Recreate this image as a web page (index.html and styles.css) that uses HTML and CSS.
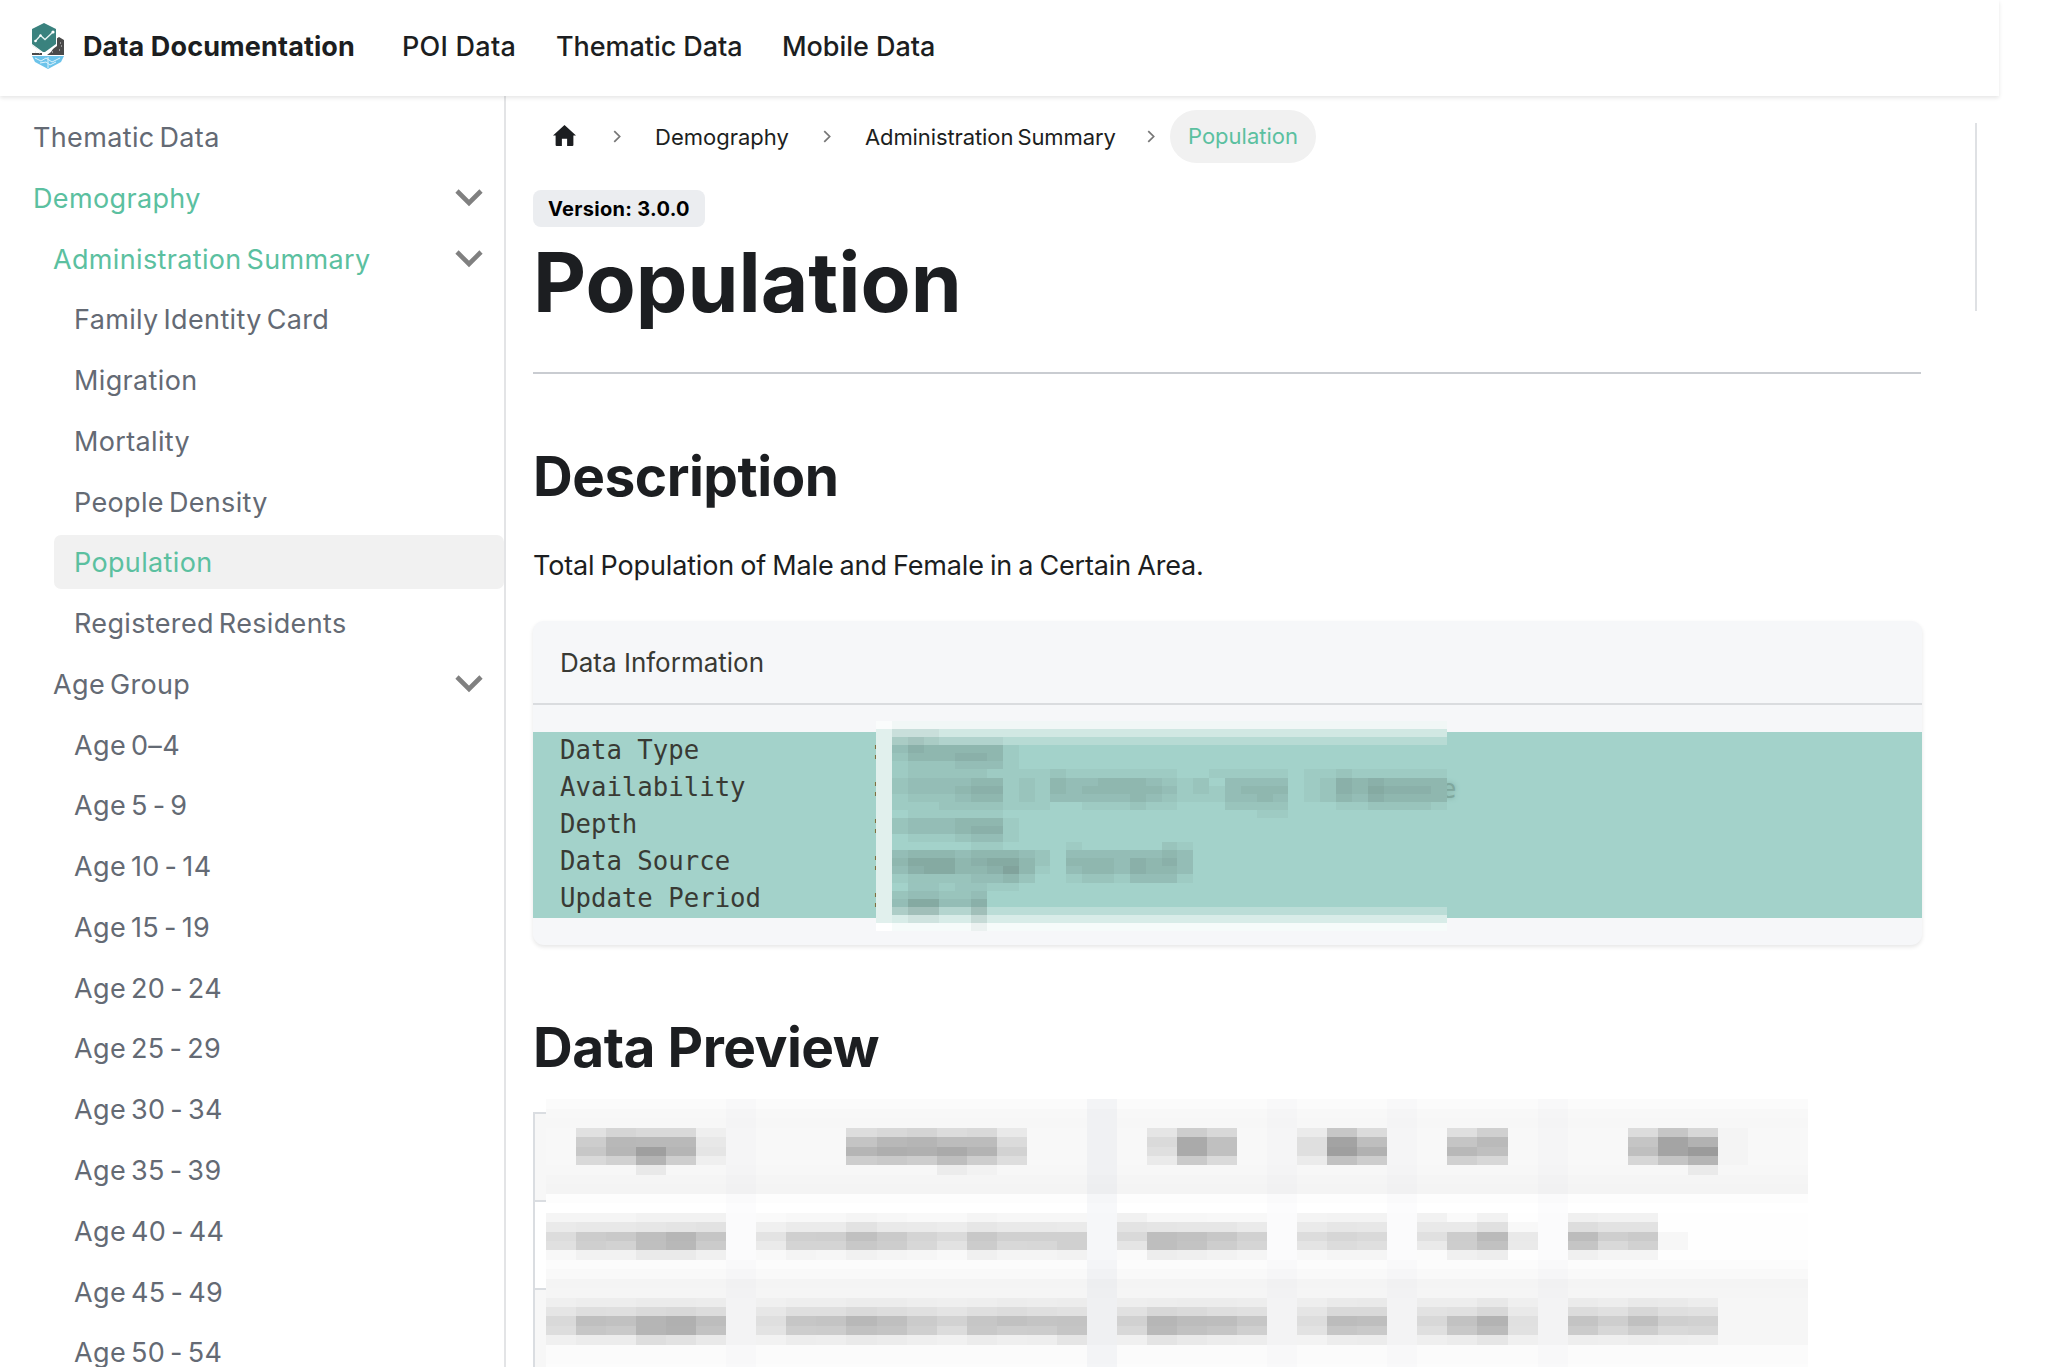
FILE: index.html
```html
<!DOCTYPE html>
<html lang="en">
<head>
    <meta charset="UTF-8">
    <meta name="viewport" content="width=device-width, initial-scale=1.0">
    <title>Population | Data Documentation</title>
    <link rel="stylesheet" href="styles.css">
</head>
<body>

<nav class="navbar">
    <a class="brand" href="#">
        <svg class="brand-logo" viewBox="0 0 34 46">
            <path d="M1 30 L1 22 L12 30 Z M1 22 V32 H12 V27 Z M20 29 L25 21 V16 L28 14 L33 17 V32 H16 Z" fill="#4a4a4a"/>
            <path d="M1 33 H33 L30 39 L17 46 L4 39 Z" fill="#6cc3ea"/>
            <path d="M4 35 l6 3 l5 -3 l6 4 l8 -4 M9 40 l6 -1 l4 3 l6 -3 M17 34 v11" stroke="#dff3fc" stroke-width="1" fill="none"/>
            <path d="M13 0 L26 6 V23 L15 31 V33 H11 V30 L1 22 V6 Z" fill="#fff"/>
            <path d="M13 0 L25 6 V21 L14 29 H12 L1 21 V6 Z" fill="#3a827e"/>
            <path d="M4.500 18 L9.500 12.500 L14 16.500 L22 9" stroke="#e8f4f3" stroke-width="1.300" fill="none"/>
            <circle cx="4.500" cy="18" r="1.300" fill="#fff"/>
            <circle cx="9.500" cy="12.500" r="1.200" fill="#fff"/>
            <circle cx="22" cy="9" r="1.600" fill="#fff"/>
            <path d="M4 29 h1 M8 30 h1 M29 20 h1 M28 27 h1 M21 29 h1 M30 23 h1" stroke="#ddd"/>
        </svg>
        <b class="brand-title">Data Documentation</b>
    </a>
    <a class="nav-link poi" href="#">POI Data</a>
    <a class="nav-link thematic" href="#">Thematic Data</a>
    <a class="nav-link mobile" href="#">Mobile Data</a>
</nav>

<div class="page">
    <aside class="sidebar">
        <a class="item" href="#"><span>Thematic Data</span></a>
        <a class="item active" href="#"><span>Demography</span><svg class="caret" viewBox="0 0 28 18"><path d="M2 2 L14 14 L26 2"/></svg></a>
        <a class="item level2 active" href="#"><span>Administration Summary</span><svg class="caret" viewBox="0 0 28 18"><path d="M2 2 L14 14 L26 2"/></svg></a>
        <a class="item level3" href="#"><span>Family Identity Card</span></a>
        <a class="item level3" href="#"><span>Migration</span></a>
        <a class="item level3" href="#"><span>Mortality</span></a>
        <a class="item level3" href="#"><span>People Density</span></a>
        <a class="item level3 active current" href="#"><span>Population</span></a>
        <a class="item level3" href="#"><span>Registered Residents</span></a>
        <a class="item level2" href="#"><span>Age Group</span><svg class="caret" viewBox="0 0 28 18"><path d="M2 2 L14 14 L26 2"/></svg></a>
        <a class="item level3" href="#"><span>Age 0–4</span></a>
        <a class="item level3" href="#"><span>Age 5 - 9</span></a>
        <a class="item level3" href="#"><span>Age 10 - 14</span></a>
        <a class="item level3" href="#"><span>Age 15 - 19</span></a>
        <a class="item level3" href="#"><span>Age 20 - 24</span></a>
        <a class="item level3" href="#"><span>Age 25 - 29</span></a>
        <a class="item level3" href="#"><span>Age 30 - 34</span></a>
        <a class="item level3" href="#"><span>Age 35 - 39</span></a>
        <a class="item level3" href="#"><span>Age 40 - 44</span></a>
        <a class="item level3" href="#"><span>Age 45 - 49</span></a>
        <a class="item level3" href="#"><span>Age 50 - 54</span></a>
    </aside>

    <main class="content">
        <div class="breadcrumbs">
            <svg class="home" viewBox="0 0 22 20"><path d="M11 0 L22 10 H19.500 V19 Q19.500 20 18.500 20 H13.500 V13 H8.500 V20 H3.500 Q2.500 20 2.500 19 V10 H0 Z"/></svg>
            <svg class="sep" viewBox="0 0 8 12"><path d="M1 1 L6 6 L1 11"/></svg>
            <a class="crumb c-demo" href="#">Demography</a>
            <svg class="sep" viewBox="0 0 8 12"><path d="M1 1 L6 6 L1 11"/></svg>
            <a class="crumb c-admin" href="#">Administration Summary</a>
            <svg class="sep" viewBox="0 0 8 12"><path d="M1 1 L6 6 L1 11"/></svg>
            <span class="crumb pill">Population</span>
        </div>

        <span class="version">Version: 3.0.0</span>
        <h1>Population</h1>
        <hr>

        <h2 class="h-desc">Description</h2>
        <p class="lead">Total Population of Male and Female in a Certain Area.</p>

        <section class="card">
            <div class="card-title"><span>Data Information</span></div>
            <div class="card-body">
                <pre class="info">Data Type           :
Availability        :
Depth               :
Data Source         :
Update Period       :</pre>
                <span class="last-letter">e</span>
                <svg id="info-values" class="info-values" viewBox="0 0 36 26" preserveAspectRatio="none" shape-rendering="crispEdges"></svg>
            </div>
        </section>

        <h2 class="h-preview">Data Preview</h2>
        <div class="preview">
            <div class="preview-edge">
                <div class="edge head"></div>
                <div class="edge"></div>
                <div class="edge shaded"></div>
            </div>
            <svg id="preview-table" class="preview-table" viewBox="0 0 42 30" preserveAspectRatio="none" shape-rendering="crispEdges"></svg>
        </div>
    </main>

    <div class="toc"></div>
</div>

<script src="blocks.js"></script>
</body>
</html>
```

FILE: styles.css
```css
* {
    box-sizing: border-box;
}

body {
    margin: 0;
    height: 1367px;
    overflow: hidden;
    background: #fff;
    color: #1c1e21;
    font-family: Inter, "Open Sans", sans-serif;
    font-size: 27px;
}

a {
    color: inherit;
    text-decoration: none;
}

.navbar {
    position: relative;
    z-index: 2;
    display: flex;
    align-items: center;
    width: 1999px;
    height: 96px;
    padding: 0 0 4px 31px;
    background: #fff;
    box-shadow: 0 2px 4px rgba(0, 0, 0, 0.1);
}

.brand {
    display: flex;
    align-items: center;
    width: 371px;
}

.brand-logo {
    width: 34px;
    height: 46px;
    margin-right: 18px;
}

.brand-title {
    font-weight: 700;
    letter-spacing: 0.12px;
}

.nav-link {
    font-weight: 500;
    white-space: nowrap;
    letter-spacing: -0.05px;
}

.poi {
    width: 154px;
    letter-spacing: 0.25px;
}

.thematic {
    width: 226px;
}

.page {
    display: flex;
    height: 1271px;
}

/* left menu */
.sidebar {
    flex: none;
    width: 506px;
    height: 1271px;
    padding-top: 14px;
    border-right: 2px solid #e3e4e6;
    overflow: hidden;
    color: #646a74;
}

.item {
    display: flex;
    align-items: center;
    justify-content: space-between;
    height: 54px;
    margin-bottom: 6.77px;
    margin-left: 13px;
    padding: 1px 21px 0 20px;
    border-radius: 7px;
    letter-spacing: 0.35px;
    word-spacing: -3px;
    white-space: nowrap;
}

.level2 {
    margin-left: 33px;
}

.level3 {
    margin-left: 54px;
}

.active {
    color: #5bc0a0;
}

.current {
    background: #f1f1f1;
}

.caret {
    width: 28px;
    height: 18px;
}

.caret path {
    fill: none;
    stroke: #808080;
    stroke-width: 4.6;
}

/* document column */
.content {
    flex: none;
    width: 1388px;
    margin-left: 27px;
    padding-top: 14px;
}

.breadcrumbs {
    display: flex;
    align-items: center;
    height: 53px;
    padding-left: 20px;
    font-size: 22px;
}

.home {
    width: 23px;
    height: 21px;
    margin-top: -2px;
    margin-right: 37px;
    fill: #1c1e21;
}

.sep {
    width: 9px;
    height: 13px;
    margin-right: 33px;
}

.sep path {
    fill: none;
    stroke: #777;
    stroke-width: 1.6;
}

.crumb {
    white-space: nowrap;
}

.c-demo {
    width: 168px;
}

.c-admin {
    width: 282px;
    letter-spacing: -0.1px;
    word-spacing: -2px;
}

.pill {
    width: 146px;
    height: 53px;
    margin-left: -19px;
    border-radius: 27px;
    background: #f1f1f1;
    color: #5bc0a0;
    line-height: 53px;
    text-align: center;
}

.version {
    display: block;
    width: 172px;
    height: 37px;
    margin-top: 27px;
    border-radius: 8px;
    background: #ebedf0;
    color: #000;
    font-size: 20px;
    font-weight: 700;
    letter-spacing: 0.3px;
    line-height: 38px;
    text-align: center;
}

h1,
h2,
p {
    margin: 0;
    white-space: nowrap;
}

h1 {
    height: 110px;
    margin-top: 1px;
    font-size: 82px;
    font-weight: 700;
    line-height: 110px;
}

hr {
    height: 2px;
    margin: 34px 0 0;
    border: 0;
    background: #c9ccd1;
}

h2 {
    height: 70px;
    font-size: 55px;
    font-weight: 700;
    letter-spacing: -0.5px;
    line-height: 70px;
}

.h-desc {
    margin-top: 67px;
}

.lead {
    height: 40px;
    margin-top: 35px;
    letter-spacing: -0.15px;
    line-height: 40px;
    word-spacing: -1.3px;
}

.card {
    width: 1389px;
    height: 324px;
    margin-top: 35px;
    border-radius: 11px;
    background: #f6f7f9;
    box-shadow: 0 2px 4px rgba(0, 0, 0, 0.1);
}

.card-title {
    display: flex;
    align-items: center;
    height: 84px;
    padding-left: 27px;
    border-bottom: 2px solid #dadcdf;
    color: #393a34;
    font-size: 26px;
}

.card-body {
    position: relative;
    padding-top: 27px;
}

.info {
    height: 186px;
    margin: 0;
    padding-left: 27px;
    background: #a3d2ca;
    color: #393a34;
    font-family: "DejaVu Sans Mono", monospace;
    font-size: 25.7px;
    line-height: 37.1px;
}

/* blurred values lie over the code block */
.info-values {
    position: absolute;
    left: 343px;
    top: 16px;
    width: 571px;
    height: 210px;
}

.last-letter {
    position: absolute;
    left: 908px;
    top: 69px;
    color: #7fa79d;
    font: 25.7px/30px "DejaVu Sans Mono", monospace;
    text-shadow: 0 0 5px #7fa79d;
}

.h-preview {
    margin-top: 67px;
}

.preview {
    display: flex;
    margin-top: 6px;
}

.preview-edge {
    width: 11px;
    margin-right: 2px;
    padding-top: 24px;
}

.edge {
    width: 13px;
    height: 88px;
    border-top: 2px solid #dadde1;
    border-left: 2px solid #dadde1;
}

.edge.head,
.edge.shaded {
    background: #f7f7f7;
}

.preview-table {
    width: 1262px;
    height: 283px;
    margin-top: 2px;
}

/* line beside the table of contents */
.toc {
    width: 2px;
    height: 188px;
    margin-top: 27px;
    margin-left: 54px;
    background: #dfe1e4;
}
```

FILE: blocks.js
```js
var SVG = 'http://www.w3.org/2000/svg';

function block(svg, x, y, w, h, color) {
    var r = document.createElementNS(SVG, 'rect');
    r.setAttribute('x', x);
    r.setAttribute('y', y);
    r.setAttribute('width', w);
    r.setAttribute('height', h);
    r.setAttribute('fill', color);
    svg.appendChild(r);
}

// each run: first column, first row, then one line of two digit greys per row
function greys(svg, x, y, lines) {
    lines.forEach(function (line, j) {
        line.split(' ').forEach(function (g, i) {
            if (g !== '--') block(svg, x + i, y + j, 1, 1, '#' + g + g + g);
        });
    });
}

// each run: column, row, darkness digits 0-9 per cell
function shades(svg, x, y, lines) {
    lines.forEach(function (line, j) {
        line.split('').forEach(function (d, i) {
            if (d !== '0') block(svg, x + i, y + j, 1, 1, 'rgba(93,115,108,' + d * 0.07 + ')');
        });
    });
}

var info = document.getElementById('info-values');
block(info, 0, 0, 36, 26, '#a3d2ca');
block(info, 0, 0, 36, 1, '#f1f7f6');
block(info, 0, 1, 36, 1, '#d1e8e3');
block(info, 0, 2, 36, 1, '#b7dbd4');
block(info, 0, 23, 36, 1, '#bbddd7');
block(info, 0, 24, 36, 1, '#d8ece8');
block(info, 0, 25, 36, 1, '#f6fbfa');
block(info, 0, 0, 1, 26, '#e1f0ed');
block(info, 0, 0, 1, 1, '#fafcfc');
block(info, 0, 25, 1, 1, '#ffffff');
shades(info, 1, 1, ['1110000', '2321111', '35444441', '24445541', '12223331']);
shades(info, 1, 6, [
    '12222211112111111100111110112111111',
    '23333441214334443212033330125454444',
    '23334551214344444312134440125465554',
    '12223441213333343211133430124354444',
    '11122221110011121100022220001122221',
    '01111110000000000000000110000000000'
]);
shades(info, 1, 12, ['23334441', '23334551', '01112331', '00000110']);
shades(info, 1, 15, [
    '0000000000010000021',
    '3444344432033333343',
    '4666456642044435453',
    '3566445741034435443',
    '1222233420012213331',
    '0111111100000000000'
]);
shades(info, 1, 20, ['0110110', '2332230', '3663350', '2441140', '0110020', '0000010']);

var table = document.getElementById('preview-table');
['ff', 'fb', 'f8', 'f7', 'f8', 'f8', 'f8', 'f8', 'f7', 'f5', 'f4', 'fd', 'ff', 'fe', 'fe', 'fe', 'fe', 'fe', 'fc', 'f9', 'f4', 'f5', 'f6', 'f6', 'f6', 'f6', 'f6', 'fb', 'fb', 'fc'].forEach(function (g, j) {
    block(table, 0, j, 42, 1, '#' + g + g + g);
});
[6, 18, 24, 28, 33].forEach(function (x) {
    block(table, x, 1, 1, 29, 'rgba(190,200,215,' + (x === 18 ? 0.12 : 0.05) + ')');
});

// header
greys(table, 1, 4, ['e1 d5 d9 d9 ef', 'cd b8 b9 b9 e8', 'c7 b6 9f b5 e5', 'd9 d1 b4 ce ef', '-- -- e9 -- --']);
greys(table, 10, 4, ['dd d8 d4 dc d9 e9', 'c4 b8 b5 bc bc db', 'b5 ae b0 aa b3 d2', 'cd c9 cd be cd dd', '-- -- -- ec f2 --']);
greys(table, 20, 4, ['e5 cd d8', 'da aa c0', 'df aa c0', 'ea ca da']);
greys(table, 25, 4, ['eb c7 db', 'df a3 be', 'df 9f b1', 'eb c1 cd']);
greys(table, 30, 4, ['df d0', 'c5 ba', 'b8 bf', 'd0 d7']);
greys(table, 36, 4, ['dc c6 d7 f4', 'c5 a4 b2 f4', 'bf a4 9b f4', 'd6 c4 b5 f4', '-- -- ea --']);

// first row
greys(table, 0, 13, ['f5 f5 f5 f2 f2 f2', 'ea e8 e8 e6 e4 e2', 'dc cc c9 be b6 c5', 'e0 cf d2 bf b8 cb', 'f8 f2 f2 ea ea f0']);
greys(table, 7, 13, ['fa f8 f8 f5 f7 f9 f9 f5 f7 f7 f7', 'f0 eb eb e2 e9 ea ec e6 e9 e9 ea', 'e3 cf ce c0 ca d4 da c8 d0 d0 d0', 'ea d4 d4 c8 cd d7 e2 cc d8 d7 d0', 'f9 f4 f6 f1 f4 f6 f9 f0 f4 f4 f2']);
greys(table, 19, 13, ['f1 f7 f7 f8 f8', 'e3 e5 e6 e6 ea', 'd9 be c1 c7 d1', 'e5 be c3 cd d5', 'fa ed ef f2 f5']);
greys(table, 25, 13, ['f4 f3 f3', 'ea e6 e7', 'dc d6 d9', 'e4 dc df', 'f8 f5 f5']);
greys(table, 29, 13, ['f2 fa f2 fe', 'e9 e9 e0 f8', 'e0 cc ba e9', 'ea cd c1 ea', 'fb f0 ed --']);
greys(table, 34, 13, ['f0 f2 f2 --', 'dd e2 e2 --', 'bc ce ca f7', 'c5 d9 d1 f7', 'f0 f4 f4 --']);

// second row
greys(table, 0, 22, ['ef ed ed eb eb ec', 'e5 de df da d8 dc', 'd9 bf c1 b5 b0 bd', 'dd c6 c9 b5 b1 c2', 'f0 ec ec de e2 e9']);
greys(table, 7, 22, ['f0 ee ee ec ec ee ef ee ec ed ec', 'e7 df df da dd e0 e4 df dc df e1', 'df c6 c4 b8 bf cb d2 c6 c1 c4 c3', 'e3 cd cc c1 c4 cf dc c8 cd cc c5', 'f2 ed ee ea ec ef f1 ec ef ee e5']);
greys(table, 19, 22, ['ee ed ec ec ed', 'e1 d7 da de e0', 'd1 b6 bc bd c6', 'd8 b9 c1 c5 cf', 'f0 e4 e9 ec ed']);
greys(table, 25, 22, ['ee ea e9', 'e5 d9 d9', 'dd bc be', 'e2 c6 c9', 'f3 ed ec']);
greys(table, 29, 22, ['ed ed e8 ef', 'e2 e0 d8 e9', 'd8 c2 b3 e0', 'df c8 bb e1', 'ef ec e6 f0']);
greys(table, 34, 22, ['eb ed e9 ea ed', 'dc e0 d7 df e1', 'c4 ce c0 cf d1', 'cb d7 cd d9 d7', 'ee ef ed ee ef']);
```
